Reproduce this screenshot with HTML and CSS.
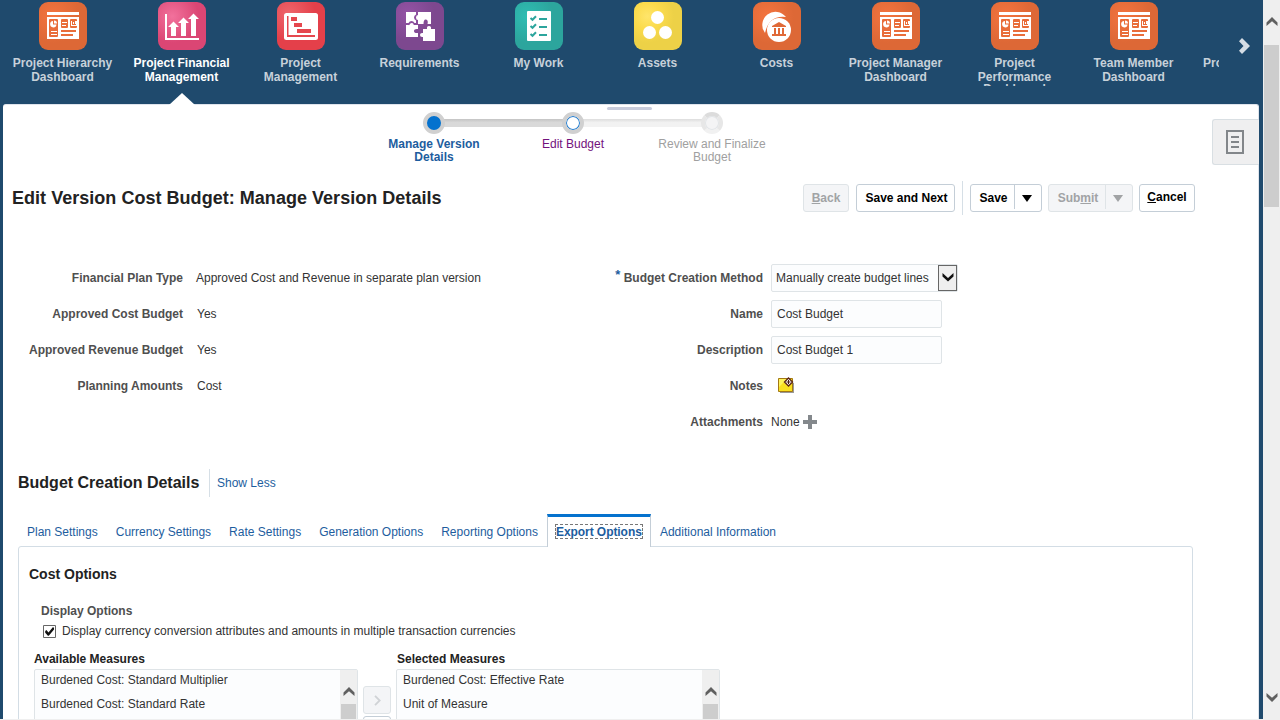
FILE: index.html
```html
<!DOCTYPE html>
<html lang="en">
<head>
<meta charset="utf-8">
<title>Edit Version Cost Budget</title>
<link rel="stylesheet" href="styles.css">
</head>
<body>
<svg class="defs" aria-hidden="true">
  <defs>
    <radialGradient id="g-orange" cx=".3" cy=".3" r=".55"><stop offset="0" stop-color="#f4743f"/><stop offset="1" stop-color="#dd6836"/></radialGradient>
    <radialGradient id="g-pink" cx=".3" cy=".3" r=".55"><stop offset="0" stop-color="#f2719c"/><stop offset="1" stop-color="#db4674"/></radialGradient>
    <radialGradient id="g-red" cx=".25" cy=".25" r=".55"><stop offset="0" stop-color="#ee666c"/><stop offset="1" stop-color="#e4404a"/></radialGradient>
    <radialGradient id="g-purple" cx=".25" cy=".25" r=".55"><stop offset="0" stop-color="#9453a5"/><stop offset="1" stop-color="#7d488f"/></radialGradient>
    <radialGradient id="g-teal" cx=".25" cy=".3" r=".55"><stop offset="0" stop-color="#2fbdb3"/><stop offset="1" stop-color="#2ca59d"/></radialGradient>
    <radialGradient id="g-yellow" cx=".28" cy=".3" r=".55"><stop offset="0" stop-color="#ffe56b"/><stop offset=".5" stop-color="#fbdb4c"/><stop offset="1" stop-color="#edd147"/></radialGradient>
    <symbol id="dashboard" viewBox="0 0 48 48">
      <rect width="48" height="48" rx="9" fill="url(#g-orange)"/>
      <path fill="#fff" d="M8 10h32v3H8zM8 15h32v22H8z"/>
      <path fill="#e96d3a" d="M11 17h7q1 0 1 1v16q0 1-1 1h-7q-1 0-1-1V18q0-1 1-1zM23 17h5q1 0 1 1v7q0 1-1 1h-5q-1 0-1-1v-7q0-1 1-1zM32 17h5q1 0 1 1v7q0 1-1 1h-5q-1 0-1-1v-7q0-1 1-1zM22 28h15v2H22zM22 32h12v2H22z"/>
      <path fill="#fff" d="M14 19v3.500h3.500a3.200 3.200 0 1 1-3.500-3.500zM15 18.500a3 3 0 0 1 3 3h-3zM12 29h6v1h-6zM12 32h6v1h-6zM23 20h5v1h-5zM23 23h4v1h-4zM32 19h1v4h4v-4h1v5h-6zM34 20h1v2h-1zM36 19h1v3h-1z"/>
    </symbol>
    <symbol id="financial" viewBox="0 0 48 48">
      <rect width="48" height="48" rx="9" fill="url(#g-pink)"/>
      <path fill="#fff" d="M7 12h2v24h32v2H7zM13 34v-9h-3l5.500-5.500L21 25h-3v9zM23 34V21h-3l5.500-5.500L31 21h-3v13zM33 34V17h-3l5.500-5.500L41 17h-3v17z"/>
    </symbol>
    <symbol id="gantt" viewBox="0 0 48 48">
      <rect width="48" height="48" rx="9" fill="url(#g-red)"/>
      <rect x="7" y="11" width="34" height="27" rx="2.500" fill="#fff"/>
      <path fill="#e5484f" d="M10 14h1.500v19H38v2H10zM14 15h6v4h-6zM17 21h8v4h-8zM20 27h14v4H20z"/>
    </symbol>
    <symbol id="puzzle" viewBox="0 0 48 48">
      <rect width="48" height="48" rx="9" fill="url(#g-purple)"/>
      <path fill="#fff" d="M10 10h10v2.500q-2 1-2 3t2 3V21h-1.500q-1-2-3-2t-3 2H10zM22 10h13v12h-3.500q1-4-1.500-4.500t-2.500 4.500H22v-4q-2 0-2-2.500t2-2.500zM10 23h2.500q1 .5 1.500-1 .5-1 2-1t1.500 1.500l.5.500h4v4q-4-.5-4 2t4 2v4H10zM27 27h4q-.5-3 2-3t2 3h4v12H27v-4q-3 .5-3-2t3-2z"/>
    </symbol>
    <symbol id="tasks" viewBox="0 0 48 48">
      <rect width="48" height="48" rx="9" fill="url(#g-teal)"/>
      <rect x="12" y="9" width="24" height="30" rx="1" fill="#fff"/>
      <path fill="none" stroke="#2ca59d" stroke-width="2" d="M15.500 16l2 1.800 3.500-3.500M15.500 24l2 1.800 3.500-3.500M15.500 32l2 1.800 3.500-3.500M24 17h8M24 25h8M24 33h8"/>
    </symbol>
    <symbol id="assets" viewBox="0 0 48 48">
      <rect width="48" height="48" rx="9" fill="url(#g-yellow)"/>
      <circle cx="23.500" cy="15.500" r="6.500" fill="#fff"/><circle cx="15.500" cy="30.500" r="6.500" fill="#fff"/><circle cx="31.500" cy="30.500" r="6.500" fill="#fff"/>
    </symbol>
    <symbol id="costs" viewBox="0 0 48 48">
      <rect width="48" height="48" rx="9" fill="url(#g-orange)"/>
      <path fill="#fff" d="M12 31A13 13 0 1 1 33 15Q16 13 12 31z"/>
      <circle cx="26" cy="28" r="12" fill="#fff"/>
      <path fill="#e06937" d="M26 20l7 4v1H19v-1zM21 26h2v6h-2zM25 26h2v6h-2zM29 26h2v6h-2zM19 32h14v2H19z"/>
    </symbol>
    <symbol id="up" viewBox="0 0 12 9"><path fill="#606060" d="M.5 5.500L6 0l5.500 5.500V9L6 4.200.5 9z"/></symbol>
  </defs>
</svg>
<div class="app">
  <div class="main">
    <nav class="springboard">
      <div class="strip">
        <a class="tile"><svg><use href="#dashboard"/></svg><span>Project Hierarchy<br>Dashboard</span></a>
        <a class="tile current"><svg><use href="#financial"/></svg><span>Project Financial<br>Management</span></a>
        <a class="tile"><svg><use href="#gantt"/></svg><span>Project<br>Management</span></a>
        <a class="tile"><svg><use href="#puzzle"/></svg><span>Requirements</span></a>
        <a class="tile"><svg><use href="#tasks"/></svg><span>My Work</span></a>
        <a class="tile"><svg><use href="#assets"/></svg><span>Assets</span></a>
        <a class="tile costs"><svg><use href="#costs"/></svg><span>Costs</span></a>
        <a class="tile"><svg><use href="#dashboard"/></svg><span>Project Manager<br>Dashboard</span></a>
        <a class="tile"><svg><use href="#dashboard"/></svg><span>Project<br>Performance</span><span class="third">Dashboard</span></a>
        <a class="tile"><svg><use href="#dashboard"/></svg><span>Team Member<br>Dashboard</span></a>
        <a class="tile partial"><span>Project</span></a>
      </div>
      <svg class="next" viewBox="0 0 12 16"><path fill="#d5dde5" d="M1 3.200L4 0l8 8-8 8-3-3.200L5.500 8z"/></svg>
    </nav>
    <main class="page">
      <i class="pointer"></i>
      <i class="handle"></i>
      <div class="drawer"><svg width="18" height="24" viewBox="0 0 18 24"><path fill="none" stroke="#82868a" stroke-width="2" d="M1 1h16v22H1zM5 7h8M5 12h8M5 17h8"/></svg></div>

      <div class="train">
        <div class="stop now"><i></i><span>Manage Version Details</span></div>
        <div class="stop visited"><i></i><span>Edit Budget</span></div>
        <div class="stop off"><i></i><span>Review and Finalize Budget</span></div>
      </div>

      <header class="titlebar">
        <h1>Edit Version Cost Budget: Manage Version Details</h1>
        <div class="actions">
          <button class="btn back disabled"><span><u>B</u>ack</span></button>
          <button class="btn savenext">Save and Next</button>
          <i class="sep"></i>
          <button class="btn split save"><span>Save</span><b></b></button>
          <button class="btn split submit disabled"><span>Sub<u>m</u>it</span><b></b></button>
          <button class="btn cancel"><span><u>C</u>ancel</span></button>
        </div>
      </header>

      <section class="form">
        <div class="left">
          <label>Financial Plan Type</label><span>Approved Cost and Revenue in separate plan version</span>
          <label>Approved Cost Budget</label><span class="nudge">Yes</span>
          <label>Approved Revenue Budget</label><span class="nudge">Yes</span>
          <label>Planning Amounts</label><span class="nudge">Cost</span>
        </div>
        <div class="right">
          <label><em>*</em> Budget Creation Method</label>
          <div class="field select"><span>Manually create budget lines</span><i><svg width="12" height="9" viewBox="0 0 12 9"><path fill="#111" d="M.5 0L6 5 11.500 0v3.500L6 8.500.5 3.500z"/></svg></i></div>
          <label>Name</label><div class="field">Cost Budget</div>
          <label>Description</label><div class="field">Cost Budget 1</div>
          <label>Notes</label>
          <div class="note"><svg width="16" height="16" viewBox="0 0 16 16">
            <path fill="#999" d="M2 14h13V6h1v10H2z"/><path fill="#f9e021" stroke="#a37814" d="M.5 1.500h14v13H.5z"/><path fill="#fff45c" d="M1 2h8L1 10z"/>
            <path fill="#fff" stroke="#5b2416" stroke-width="1.300" d="M10.500 1l4 4-4 4-4-4z"/><path stroke="#4a1d10" d="M10.500 3v4M8.500 5h4"/></svg></div>
          <label>Attachments</label>
          <div class="attach">None<svg width="14" height="14" viewBox="0 0 14 14"><path fill="#84888c" d="M5 0h4v5h5v4H9v5H5V9H0V5h5z"/></svg></div>
        </div>
      </section>

      <div class="subhead"><h2>Budget Creation Details</h2><a>Show Less</a></div>

      <nav class="tabs">
        <a>Plan Settings</a><a>Currency Settings</a><a>Rate Settings</a><a>Generation Options</a><a>Reporting Options</a><a class="active"><span>Export Options</span></a><a>Additional Information</a>
      </nav>
      <section class="tabpanel">
        <h3>Cost Options</h3>
        <h4>Display Options</h4>
        <div class="check"><svg width="13" height="13" viewBox="0 0 13 13"><path fill="#fff" stroke="#666" d="M.5.500h12v12H.5z"/><path fill="#111" d="M2.200 6l1.200-1L5.500 7.500l4.500-5.500 1 1v1.500L5.800 10.800H4.900L2.200 7.800z"/></svg><span>Display currency conversion attributes and amounts in multiple transaction currencies</span></div>
        <div class="shuttle">
          <div class="listcol"><h5>Available Measures</h5>
            <div class="list"><div class="items"><div>Burdened Cost: Standard Multiplier</div><div>Burdened Cost: Standard Rate</div></div><div class="bar"><svg width="12" height="9"><use href="#up"/></svg><i></i></div></div>
          </div>
          <div class="movers"><button><svg width="7" height="11" viewBox="0 0 7 11"><path fill="none" stroke="#d0d3d6" stroke-width="1.800" d="M1 .8l4.700 4.700L1 10.200"/></svg></button><button class="on"></button></div>
          <div class="listcol"><h5 class="selected">Selected Measures</h5>
            <div class="list"><div class="items"><div>Burdened Cost: Effective Rate</div><div>Unit of Measure</div></div><div class="bar"><svg width="12" height="9"><use href="#up"/></svg><i></i></div></div>
          </div>
        </div>
      </section>
    </main>
  </div>
  <aside class="scroll"><svg width="12" height="9"><use href="#up"/></svg><i></i><svg class="down" width="12" height="9"><use href="#up"/></svg></aside>
</div>
</body>
</html>
```
FILE: styles.css
```css
* { box-sizing: border-box; }
body { margin: 0; background: #efefef; font: 12px/14px "Liberation Sans", Arial, sans-serif; color: #333; overflow: hidden; }
h1, h2, h3, h4, h5 { margin: 0; color: #222; }
i, em { font-style: normal; }
svg { display: block; flex: none; }
button { font: inherit; margin: 0; padding: 0; }
.defs { position: absolute; width: 0; height: 0; }
.app { display: flex; width: 1280px; height: 719px; overflow: hidden; }
.main { width: 1263px; height: 719px; background: #1f4a6d; }

.springboard { height: 104px; display: flex; align-items: flex-start; padding-left: 3px; }
.strip { display: flex; width: 1216px; height: 86px; padding-top: 2px; overflow: hidden; }
.tile { flex: none; width: 119px; display: flex; flex-direction: column; align-items: center; font-weight: bold; color: #c7d1da; text-align: center; }
.tile svg { width: 48px; height: 48px; margin: 0 0 6px 1px; }
.tile.current { color: #fff; }
.tile .third { margin-top: -2px; }
.tile.partial { padding-top: 54px; align-items: flex-start; padding-left: 10px; }
.next { width: 12px; height: 16px; margin: 38px 0 0 19px; }

.page { position: relative; width: 1256px; height: 615px; margin-left: 3px; background: #fff; border: 1px solid #dfe4ec; border-width: 1px 1px 0 0; border-radius: 3px 3px 0 0; padding-top: 7px; }
.pointer { position: absolute; left: 166px; top: -12px; border: solid transparent; border-width: 0 13px 12px; border-bottom-color: #fff; }
.handle { position: absolute; left: 604px; top: 2px; width: 45px; height: 3px; border-radius: 2px; background: #c8ccdc; }
.drawer { position: absolute; right: -1px; top: 14px; width: 47px; height: 46px; display: flex; align-items: center; padding-left: 13px; background: #efeff0; border: 1px solid #d9dfe3; border-right: 0; border-radius: 3px 0 0 3px; }

.train { display: flex; width: 417px; height: 61px; margin-left: 361px; }
.stop { position: relative; width: 139px; display: flex; flex-direction: column; align-items: center; text-align: center; line-height: 13px; color: #1d5d9e; }
.stop > i { width: 22px; height: 22px; border-radius: 50%; border: 4px solid #d0d0d0; background: #0572ce; z-index: 1; }
.stop > span { width: 120px; margin: 4px 0 0 1px; }
.stop::before { content: ""; position: absolute; left: 80px; top: 7px; width: 119px; height: 8px; background: linear-gradient(#c4c4c4, #d9d9d9 45%); }
.stop.now > span { font-weight: bold; padding: 0 10px; }
.stop.visited { color: #72127c; }
.stop.visited > i { background: #fff; box-shadow: inset 0 0 0 1px #1b7ad0; }
.stop.visited::before { background: linear-gradient(#ddd, #f2f2f2 45%); }
.stop.off { color: #a0a0a0; }
.stop.off > i { background: #f4f4f5; border-color: #dcdcdc #e7e7e7 #f1f1f1; box-shadow: inset 0 0 0 1px #e2e5e8; }
.stop.off::before { display: none; }

.titlebar { display: flex; justify-content: space-between; height: 50px; padding: 4px 63px 0 9px; margin-top: 4px; }
.titlebar h1 { font-size: 18px; line-height: 34px; letter-spacing: .03px; }
.actions { display: flex; align-items: center; height: 34px; font-weight: bold; }
.btn { height: 28px; background: #fff; border: 1px solid #c4ced7; border-radius: 3px; font-weight: bold; color: #000; }
.btn.disabled { background: #f4f5f7; border-color: #dfe4e7; color: #a1a3a5; }
.back { width: 46px; margin-right: 7px; }
.savenext { width: 99px; margin-right: 7px; padding-left: 2px; }
.sep { width: 1px; height: 34px; background: #d6dfe6; margin-right: 7px; }
.split { display: flex; }
.split span { flex: 1; line-height: 26px; padding-left: 2px; }
.split b { width: 27px; height: 24px; border-left: 1px solid #c4ced7; }
.split b::before { content: ""; display: block; margin: 10px 0 0 7px; width: 0; border: solid transparent; border-width: 7px 5px 0; border-top-color: currentColor; }
.split.disabled b { border-color: #dfe4e7; }
.save { width: 72px; margin-right: 6px; }
.submit { width: 85px; margin-right: 6px; }
.cancel { width: 56px; padding-bottom: 2px; }

.form { display: flex; height: 236px; padding-top: 33px; }
.form label { font-weight: bold; color: #4f4f4f; text-align: right; }
.left, .right { display: grid; grid-auto-rows: 36px; align-items: center; align-content: start; }
.left { width: 608px; grid-template-columns: 180px 1fr; column-gap: 13px; }
.left .nudge { padding-left: 1px; }
.right { grid-template-columns: 152px 190px; column-gap: 8px; }
.right label em { color: #1d5d9e; font-size: 13px; position: relative; top: -3px; }
.field { width: 171px; height: 28px; border: 1px solid #dfe4e7; border-radius: 2px; background: #fcfdfe; line-height: 26px; padding-left: 5px; }
.select { width: 187px; display: flex; justify-content: space-between; padding-left: 4px; }
.select i { width: 19px; height: 26px; background: #efefef; border: 1px solid #666; display: flex; align-items: center; justify-content: center; padding-bottom: 2px; }
.note { padding: 0 0 2px 7px; }
.attach { display: flex; align-items: center; gap: 3px; }

.subhead { display: flex; height: 45px; margin-top: 6px; padding-left: 15px; line-height: 28px; }
.subhead h2 { font-size: 16px; width: 192px; height: 28px; border-right: 1px solid #d6dfe6; margin-right: 7px; line-height: 27px; }
.subhead a { color: #1d5d9e; line-height: 29px; }
.tabs { display: flex; height: 33px; margin: 0 0 -1px 15px; color: #1d5d9e; position: relative; }
.tabs a { padding: 11px 9px 0; height: 32px; flex: none; }
.tabs .active { width: 104px; height: 33px; padding: 7px 8px 0; background: #fff; border: 1px solid #c4ced7; border-top: 3px solid #0572ce; border-bottom: 0; font-weight: bold; letter-spacing: -.06px; white-space: nowrap; }
.active span { display: block; outline: 1px dashed #777; height: 13px; margin-top: 1px; }
.tabpanel { width: 1175px; height: 220px; margin-left: 15px; border: 1px solid #d3dde5; border-radius: 3px; padding-top: 19px; }
.tabpanel h3 { font-size: 14px; line-height: 16px; padding-left: 10px; }
.tabpanel h4 { font-size: 12px; color: #4f4f4f; padding-left: 22px; margin-top: 22px; }
.check { display: flex; align-items: center; gap: 6px; margin: 6px 0 0 24px; }
.shuttle { display: flex; margin: 14px 0 0 15px; }
.listcol { width: 324px; }
.listcol h5 { font-size: 12px; height: 17px; }
.listcol .selected { padding-left: 1px; }
.list { display: flex; justify-content: space-between; height: 100px; background: #fcfdfe; border: 1px solid #dfe4e7; border-radius: 2px; }
.items { padding-left: 6px; line-height: 24px; margin-top: -2px; }
.bar { width: 17px; background: #efefef; padding-top: 17px; display: flex; flex-direction: column; align-items: center; }
.bar i { width: 15px; height: 60px; margin-top: 8px; background: #cdcdcd; }
.movers { width: 38px; padding: 34px 5px 0; }
.movers button { display: flex; align-items: center; justify-content: center; width: 28px; height: 28px; margin-bottom: 2px; background: #f4f5f7; border: 1px solid #dfe4e7; border-radius: 3px; }
.movers .on { background: #fff; border-color: #c4ced7; }

.scroll { width: 17px; height: 719px; display: flex; flex-direction: column; align-items: center; padding-top: 17px; background: #efefef; }
.scroll i { width: 15px; height: 162px; margin-top: 19px; background: #cdcdcd; }
.scroll .down { margin-top: auto; margin-bottom: 17px; transform: scaleY(-1); }
```
